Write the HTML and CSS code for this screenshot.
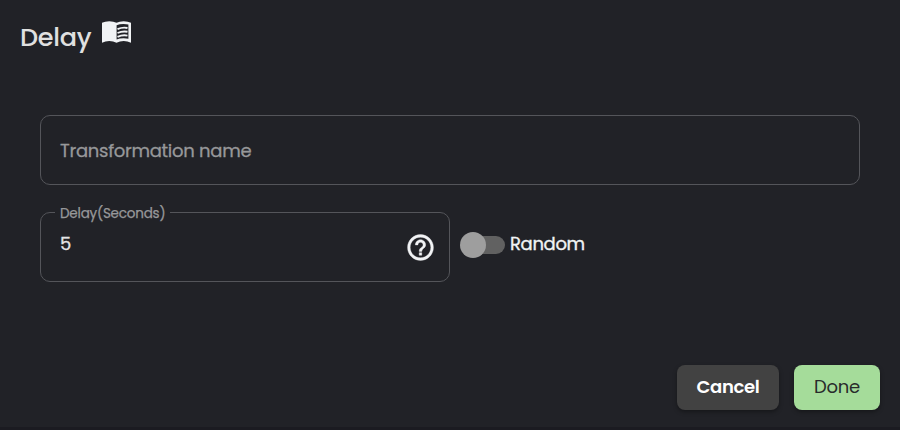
FILE: index.html
```html
<!DOCTYPE html>
<html lang="en">
<head>
<meta charset="utf-8">
<title>Delay</title>
<link rel="stylesheet" href="styles.css">
</head>
<body>
<main class="dialog">
  <header class="header">
    <h1 class="title">Delay</h1>
    <svg class="book" viewBox="0 0 29 22" aria-hidden="true">
      <path fill-rule="evenodd" d="M0 1.7Q3 .2 7.3.2T14.5 1.7Q17.5.2 21.7.2T29 1.7V21.8Q25.5 20 21.7 20T14.5 21.8Q11.3 20 7.3 20T0 21.8zM14.6 4.2V18.6Q17.5 17.3 21.5 17.3 24.5 17.3 26.4 17.8V3.6Q24.2 2.9 21.5 2.9 17.5 2.9 14.6 4.2z"/>
      <path class="lines" d="M15.5 8.2Q20.5 5.9 25.5 7M15.5 12Q20.5 9.8 25.5 10.8M15.5 15.8Q20.5 13.6 25.5 14.6"/>
    </svg>
  </header>
  <section class="fields">
    <div class="field placeholder"><span class="name">Transformation name</span></div>
    <div class="row">
      <fieldset class="field delay">
        <legend class="legend"><span>Delay(Seconds)</span></legend>
        <div class="control">
          <span class="value">5</span>
          <svg class="help" viewBox="0 0 24 24" aria-hidden="true"><path d="M11 18h2v-2h-2v2zm1-16C6.48 2 2 6.48 2 12s4.48 10 10 10 10-4.48 10-10S17.52 2 12 2zm0 18c-4.41 0-8-3.59-8-8s3.59-8 8-8 8 3.59 8 8-3.59 8-8 8zm0-14c-2.21 0-4 1.79-4 4h2c0-1.1.9-2 2-2s2 .9 2 2c0 2-3 1.75-3 5h2c0-2.25 3-2.5 3-5 0-2.21-1.79-4-4-4z"/></svg>
        </div>
      </fieldset>
      <div class="switch"><span class="thumb"></span></div>
      <span class="random">Random</span>
    </div>
  </section>
  <footer class="actions">
    <button class="btn cancel"><span>Cancel</span></button>
    <button class="btn done"><span>Done</span></button>
  </footer>
</main>
</body>
</html>
```
FILE: styles.css
```css
* { box-sizing: border-box; }
body {
  margin: 0;
  background: #212227;
  color: #f1f3f5;
  font-family: Poppins, Inter, "Open Sans", sans-serif;
  font-size: 18px;
  line-height: 24px;
}
.dialog {
  height: 430px;
  display: flex;
  flex-direction: column;
  border-bottom: 3px solid #1b1b21;
}
.header { display: flex; height: 75px; padding: 16px 20px 0; }
.title { margin: 5px 0 0; width: 82px; font-size: 25.5px; line-height: 32px; font-weight: 500; letter-spacing: -0.3px; color: #e0e0e0; }
svg { fill: #f1f3f5; flex: none; }
.book { width: 29px; height: 22px; margin-top: 5px; }
.lines { fill: none; stroke: #f1f3f5; stroke-width: 1.9; }
.fields { padding: 40px 40px 0; }
.field { height: 70px; border: 1px solid #54555a; border-radius: 10px; padding: 0 19px; }
.placeholder {
  display: flex;
  align-items: center;
  padding-top: 2px;
  color: #97989a;
  letter-spacing: -0.28px;
  -webkit-text-stroke: 0.3px currentColor;
}
.row { display: flex; margin-top: 20px; }
.delay { width: 410px; height: 77px; margin: 0; padding: 0 14px; }
.legend {
  padding: 0 5px;
  font-size: 13.5px;
  line-height: 17px;
  letter-spacing: -0.2px;
  color: #97989a;
  -webkit-text-stroke: 0.25px currentColor;
}
.legend span { display: block; padding-top: 1px; height: 15px; line-height: 15px; }
.control { display: flex; justify-content: space-between; padding: 12px 0 0 5px; }
.value { color: #e4e4e5; -webkit-text-stroke: 0.3px currentColor; }
.help { width: 31px; height: 31px; margin: 0 -1px 0 0; stroke: #f1f3f5; stroke-width: 0.3; }
.switch { width: 40px; height: 18px; margin: 31px 5px 0 15px; border-radius: 9px; background: #616161; display: flex; align-items: center; }
.thumb { width: 26px; height: 26px; margin-left: -5px; border-radius: 50%; background: #9e9e9e; flex: none; }
.random { margin-top: 27px; letter-spacing: -0.35px; -webkit-text-stroke: 0.35px currentColor; }
.actions { display: flex; justify-content: flex-end; gap: 15px; margin-top: auto; padding: 0 20px 17px; }
.btn { height: 45px; border: 0; border-radius: 8px; font: inherit; padding: 0; box-shadow: 0 2px 4px rgba(0,0,0,.35); }
.btn span { position: relative; top: -1px; }
.cancel { width: 102px; background: #424242; color: #fff; font-weight: 600; letter-spacing: -0.35px; }
.done { width: 86px; background: #a5dc9a; color: #282b2b; letter-spacing: -0.2px; }
```
